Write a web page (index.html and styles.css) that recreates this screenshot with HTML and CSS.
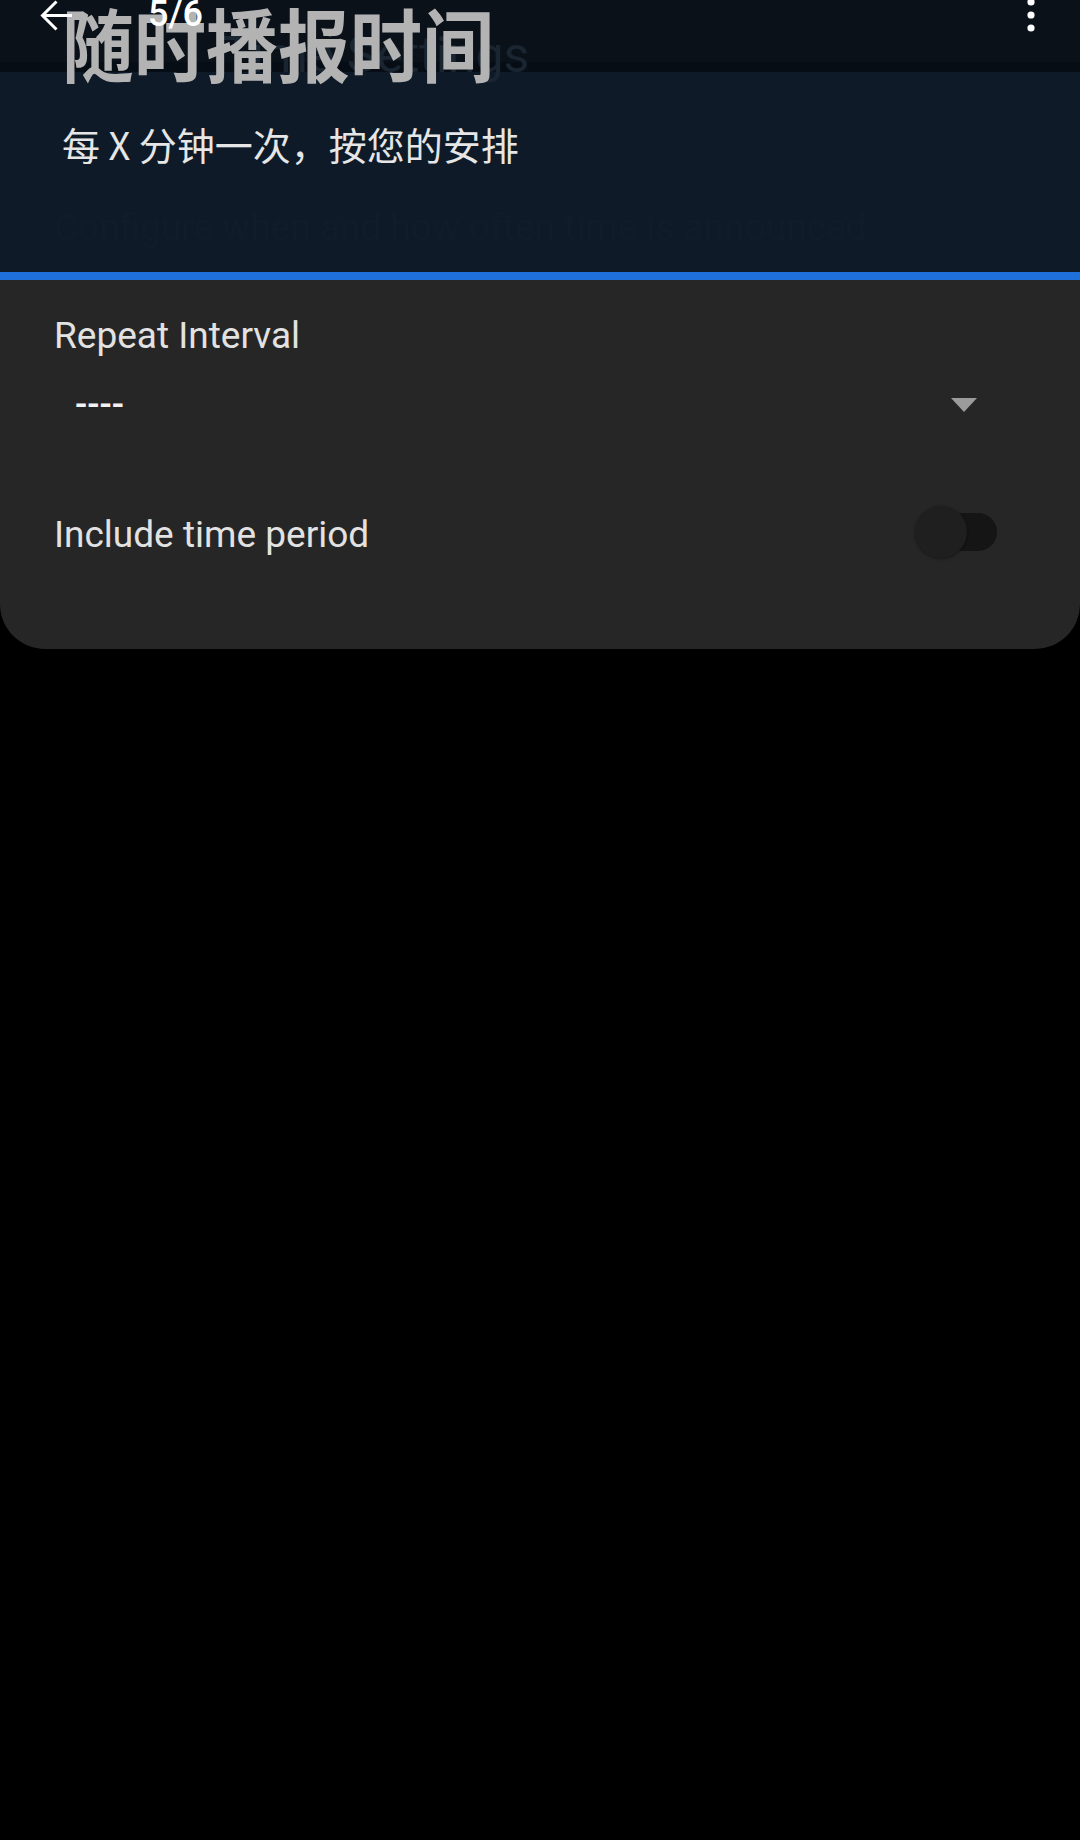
FILE: index.html
```html
<!DOCTYPE html>
<html lang="zh">
<head>
    <meta charset="UTF-8">
    <meta name="viewport" content="width=device-width, initial-scale=1.0">
    <title>随时播报时间</title>
    <link rel="stylesheet" href="styles.css">
</head>
<body>
<div class="screen">
  <!-- collapsing header, scrolled half way -->
  <header class="hero">
    <div class="toolbar">
      <svg class="back" width="33" height="31" viewBox="0 0 33 31">
        <path d="M32 15.5H3 M16.5 1.5L2.5 15.5l14 14" fill="none" stroke="#fff" stroke-width="3"/>
      </svg>
      <span class="counter">5/6</span>
      <svg class="more" width="8" height="32" viewBox="0 0 8 32">
        <circle cx="4" cy="2" r="3.6" fill="#fff"/>
        <circle cx="4" cy="15" r="3.6" fill="#fff"/>
        <circle cx="4" cy="28" r="3.6" fill="#fff"/>
      </svg>
    </div>
    <div class="title-wrap">
      <span class="ghost">Time Settings</span>
      <h1 class="title">随时播报时间</h1>
    </div>
    <p class="subtitle">每 X 分钟一次，按您的安排</p>
    <p class="desc">Configure when and how often time is announced</p>
  </header>
  <div class="accent"></div>

  <!-- settings card -->
  <section class="card">
    <div class="label">Repeat Interval</div>
    <div class="dropdown">
      <span class="value">----</span>
      <svg class="caret" width="26" height="14" viewBox="0 0 26 14">
        <polygon points="0,0 26,0 13,14" fill="#9b9b9b"/>
      </svg>
    </div>
    <div class="row">
      <span class="label">Include time period</span>
      <div class="switch">
        <span class="track"></span>
        <span class="thumb"></span>
      </div>
    </div>
  </section>
</div>
</body>
</html>
```

FILE: styles.css
```css
body {
margin:0;
padding:0;
background:#000;
font-family: Roboto, "Noto Sans", sans-serif;
}

.screen {
width:1080px;
height:1840px;
background:#000;
}

/* header: toolbar band, dark seam, then the panel */
.hero {
position:relative;
height:272px;
padding:0 0 0 62px;
box-sizing:border-box;
overflow:hidden;
background:linear-gradient(#0a1119 0, #0a1119 62px, #070d15 62px, #070d15 72px, #0e1a28 72px);
}

.toolbar {
position:absolute;
top:0;
left:0;
right:0;
z-index:2;
display:flex;
align-items:flex-start;
padding:0 45px 0 40px;
}
.toolbar .back {
display:block;
}
.toolbar .counter {
margin:-4px 0 0 75px;
font-size:36px;
line-height:36px;
font-weight:500;
color:#fff;
}
.toolbar .more {
display:block;
margin-left:auto;
}

.title-wrap {
position:relative;
display:inline-block;
margin-top:-1px;
}
.title-wrap .ghost {
position:absolute;
left:160px;
top:26px;
font-size:50px;
line-height:60px;
color:#1a2532;
white-space:nowrap;
}
.title {
position:relative;
margin:0;
font-family:"Noto Sans CJK SC", sans-serif;
font-size:72px;
line-height:85px;
font-weight:700;
color:#b3b3b3;
transform:scaleY(1.1);
}

.subtitle {
margin:36px 0 0;
font-family:"Noto Sans CJK SC", sans-serif;
font-size:38px;
line-height:48px;
color:#e6e6e6;
}
.desc {
margin:40px 0 0 -8px;
font-size:37px;
line-height:40px;
color:#111c2a;
white-space:nowrap;
}

.accent {
height:8px;
background:#2070dc;
}

/* card */
.card {
padding:34px 54px 85px;
background:#262626;
border-radius:0 0 45px 45px;
}
.label {
font-size:37px;
line-height:43px;
color:#e2e2e2;
}
.dropdown {
display:flex;
align-items:center;
height:70px;
margin:13px 49px 0 21px;
}
.dropdown .value {
font-size:36px;
line-height:43px;
font-weight:500;
color:#f2f2f2;
}
.dropdown .caret {
display:block;
margin-left:auto;
}

.row {
display:flex;
align-items:center;
justify-content:space-between;
height:64px;
margin:60px 29px 0 0;
}
.row .label {
margin-top:4px;
}

/* switch, off state */
.switch {
position:relative;
width:82px;
height:52px;
}
.switch .track {
position:absolute;
right:0;
top:7px;
width:68px;
height:38px;
border-radius:19px;
background:#151515;
}
.switch .thumb {
position:absolute;
left:0;
top:0;
width:52px;
height:52px;
border-radius:50%;
background:#1f1f1f;
box-shadow:0 1px 3px rgba(0,0,0,0.4);
}
```
